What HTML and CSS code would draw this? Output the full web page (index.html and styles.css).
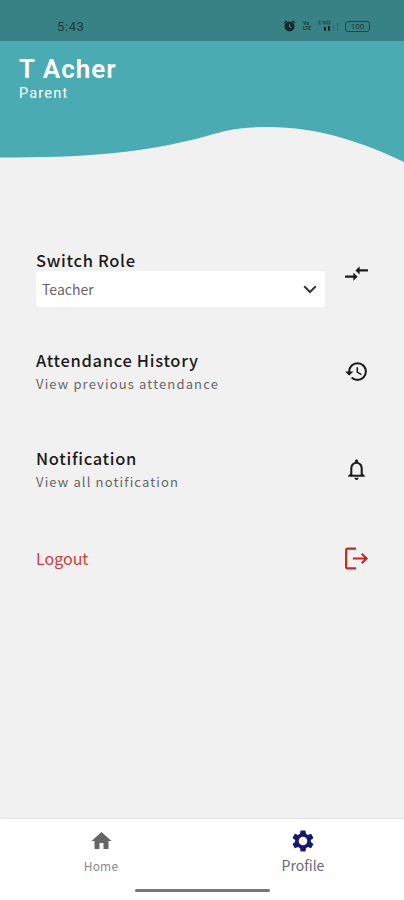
FILE: index.html
```
<!DOCTYPE html>
<html lang="en">
<head>
    <meta charset="UTF-8">
    <meta name="viewport" content="width=device-width, initial-scale=1.0">
    <title>Profile</title>
    <link rel="stylesheet" href="styles.css">
</head>
<body>
    <div class="status-bar">
        <span class="time">5:43</span>
        <div class="status-icons">
            <svg class="alarm" viewBox="0 0 12 12">
                <circle cx="6" cy="6.5" r="5"/>
                <path d="M.7 3 3 1M11.3 3 9 1" stroke="#10292b" stroke-width="1.6"/>
                <path d="M6 3.8v3l2 1" fill="none" stroke="#388184" stroke-width="1.1"/>
            </svg>
            <span class="tiny">Vo<br>LTE</span>
            <svg class="signal" viewBox="0 0 22 12">
                <path d="M3 1H1v3h2M5 1v2h2M7 1v4M9 1h3v3H9z" fill="none" stroke="#1d4649" stroke-width=".9"/>
                <path d="M6 7h2v4H6zM10 6h2v5h-2z"/>
                <path d="M15 5h1.500v6H15zM19 3h1.500v8H19z" opacity=".2"/>
            </svg>
            <span class="battery">100</span>
        </div>
    </div>

    <!-- Header -->
    <header class="header">
        <svg class="wave" viewBox="0 0 404 122" preserveAspectRatio="none">
            <path d="M0 0H404V121C362 101 318 86 268 86C242 86 226 89 207 95C140 113 82 116.500 0 116.500Z"/>
        </svg>
        <div class="user">
            <h1 class="name">T Acher</h1>
            <p class="role">Parent</p>
        </div>
    </header>

    <!-- Settings list -->
    <main class="settings">
        <div class="item item-switch">
            <div class="item-text">
                <h2 class="title">Switch Role</h2>
                <div class="select">
                    <span>Teacher</span>
                    <svg class="chevron" viewBox="0 0 14 9"><path d="M1.200 1.200 7 7l5.800-5.800"/></svg>
                </div>
            </div>
            <svg class="icon" viewBox="0 0 24 24">
                <path d="M9.010 14H1v2h8.010v3L13 15l-3.990-4v3zm5.980-1v-3H23V8h-8.010V5L11 9l3.990 4z"/>
            </svg>
        </div>

        <div class="item">
            <div class="item-text">
                <h2 class="title">Attendance History</h2>
                <p class="subtitle">View previous attendance</p>
            </div>
            <svg class="icon" viewBox="0 0 24 24">
                <path d="M13 3a9 9 0 0 0-9 9H1l3.890 3.890.07.14L9 12H6c0-3.870 3.130-7 7-7s7 3.130 7 7-3.130 7-7 7c-1.930 0-3.680-.79-4.940-2.060l-1.420 1.420A8.954 8.954 0 0 0 13 21a9 9 0 0 0 0-18zm-1 5v5l4.280 2.540.72-1.210-3.500-2.080V8H12z"/>
            </svg>
        </div>

        <div class="item">
            <div class="item-text">
                <h2 class="title">Notification</h2>
                <p class="subtitle">View all notification</p>
            </div>
            <svg class="icon" viewBox="0 0 24 24">
                <path d="M12 22c1.100 0 2-.9 2-2h-4c0 1.100.9 2 2 2zm6-6v-5c0-3.070-1.630-5.640-4.500-6.320V4c0-.83-.67-1.500-1.500-1.500s-1.500.67-1.500 1.500v.68C7.640 5.360 6 7.920 6 11v5l-2 2v1h16v-1l-2-2zm-2 1H8v-6c0-2.480 1.510-4.500 4-4.500s4 2.020 4 4.500v6z"/>
            </svg>
        </div>

        <div class="item item-logout">
            <span class="logout">Logout</span>
            <svg class="icon" viewBox="0 0 24 24">
                <path class="stroke" d="M11.500 2.500H3.500Q2 2.500 2 4v16q0 1.500 1.500 1.500h8M8.500 12h13M17 7.500l4.700 4.500-4.700 4.500"/>
            </svg>
        </div>
    </main>

    <!-- Bottom navigation -->
    <nav class="tabs">
        <a class="tab">
            <svg class="tab-icon home-icon" viewBox="0 0 24 24"><path d="M10 20v-6h4v6h5v-8h3L12 3 2 12h3v8z"/></svg>
            <span>Home</span>
        </a>
        <a class="tab active">
            <svg class="tab-icon" viewBox="0 0 24 24">
                <path fill-rule="evenodd" d="M9.600 1.500h4.800l.6 3.300 1.900 1.100 3.200-1.100 2.400 4.100-2.600 2.200v1.800l2.600 2.200-2.400 4.100-3.200-1.100-1.900 1.100-.6 3.300H9.600L9 19.200l-1.900-1.100-3.200 1.100-2.400-4.100 2.600-2.200v-1.800L1.500 8.900l2.400-4.100 3.200 1.100L9 4.800zM12 7.700a4.300 4.300 0 1 0 0 8.600 4.300 4.300 0 0 0 0-8.600z"/>
            </svg>
            <span>Profile</span>
        </a>
        <div class="home-bar"></div>
    </nav>
</body>
</html>
```
FILE: styles.css
```
:root {
    --background: #f1f1f1;
    --teal: #4aacb2;
    --teal-dark: #388184;
    --text: #1b1b1b;
    --muted: #666666;
    --danger: #c94040;
}

* {
    margin: 0;
    padding: 0;
    box-sizing: border-box;
}

body {
    display: flex;
    flex-direction: column;
    height: 100vh;
    overflow: hidden;
    background: var(--background);
    color: var(--text);
    font-family: "Noto Sans CJK SC", "Noto Sans", sans-serif;
}

/* Status bar */
.status-bar {
    display: flex;
    justify-content: space-between;
    align-items: center;
    height: 41px;
    padding: 11px 34px 0 57px;
    background: var(--teal-dark);
    color: #173c3f;
    font-family: Roboto, sans-serif;
}

.time {
    font-size: 13px;
    letter-spacing: 0.6px;
}

.status-icons {
    display: flex;
    align-items: center;
}

.status-icons svg {
    height: 12px;
    fill: #10292b;
}

.alarm {
    width: 13px;
    margin-right: 7px;
}

.signal {
    width: 22px;
    margin-right: 5px;
}

.tiny {
    width: 10px;
    font-size: 5px;
    font-weight: 700;
    line-height: 5px;
    margin-right: 5px;
}

.battery {
    width: 25px;
    height: 11px;
    border: 1px solid #1d4649;
    border-radius: 3px;
    font-size: 8px;
    line-height: 9px;
    text-align: center;
}

/* Header */
.header {
    display: grid;
    height: 122px;
    color: #ffffff;
    font-family: Roboto, sans-serif;
}

.wave,
.user {
    grid-area: 1 / 1;
}

.wave {
    width: 100%;
    height: 122px;
    fill: var(--teal);
}

.user {
    z-index: 1;
    padding: 12px 19px;
}

.name {
    font-size: 26px;
    font-weight: 600;
    line-height: 32px;
    letter-spacing: 1px;
}

.role {
    font-size: 14.5px;
    line-height: 17px;
    letter-spacing: 1.2px;
}

/* Settings list */
.settings {
    flex: 1;
    padding: 87px 35px 0 36px;
}

.item {
    display: flex;
    justify-content: space-between;
    align-items: center;
    height: 46px;
    margin-bottom: 52px;
}

.item-text {
    padding-top: 5px;
}

.item-switch {
    align-items: flex-start;
    height: 57px;
    margin-bottom: 41px;
}

.item-switch .item-text {
    padding-top: 0;
}

.item-switch .icon {
    margin-top: 11px;
}

.title {
    font-size: 16.5px;
    font-weight: 500;
    line-height: 21px;
    letter-spacing: 0.68px;
    white-space: nowrap;
}

.subtitle {
    color: var(--muted);
    font-size: 13px;
    line-height: 26px;
    letter-spacing: 1.15px;
    white-space: nowrap;
}

.select {
    display: flex;
    justify-content: space-between;
    align-items: center;
    width: 289px;
    height: 36px;
    padding: 0 8px 0 6px;
    border-radius: 3px;
    background: #ffffff;
    color: var(--muted);
    font-size: 14px;
}

.chevron {
    width: 14px;
    height: 9px;
    fill: none;
    stroke: #333333;
    stroke-width: 2;
}

.icon {
    flex: none;
    width: 25px;
    height: 25px;
    fill: var(--text);
}

.item-logout {
    height: 28px;
}

.logout {
    color: var(--danger);
    font-size: 16px;
}

.stroke {
    fill: none;
    stroke: #c92525;
    stroke-width: 2;
}

/* Bottom navigation */
.tabs {
    display: grid;
    grid-template-columns: 1fr 1fr;
    grid-template-rows: 70px 12px;
    height: 81px;
    background: #ffffff;
    box-shadow: 0 -1px 2px rgba(0, 0, 0, 0.06);
}

.tab {
    display: flex;
    flex-direction: column;
    align-items: center;
    padding-top: 10px;
    color: #8a8a8a;
    font-size: 12px;
    line-height: 26px;
    letter-spacing: 0.2px;
}

.tab-icon {
    width: 24px;
    height: 24px;
    fill: #666666;
}

.home-icon {
    width: 25px;
}

.active {
    color: #686878;
    font-size: 14px;
    line-height: 24px;
    letter-spacing: 0;
}

.active .tab-icon {
    fill: #17176b;
}

.home-bar {
    grid-column: 1 / 3;
    justify-self: center;
    width: 135px;
    height: 3px;
    border-radius: 2px;
    background: #777777;
}
```
